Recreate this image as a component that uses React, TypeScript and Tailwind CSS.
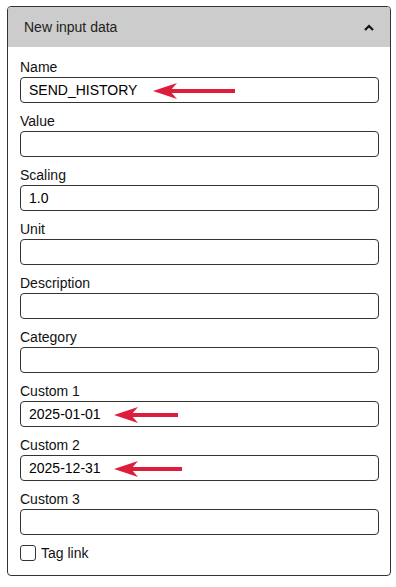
import React from 'react'

const fields = [
  { label: 'Name', value: 'SEND_HISTORY', arrow: { left: 132, width: 82 } },
  { label: 'Value', value: '' },
  { label: 'Scaling', value: '1.0' },
  { label: 'Unit', value: '' },
  { label: 'Description', value: '' },
  { label: 'Category', value: '' },
  { label: 'Custom 1', value: '2025-01-01', arrow: { left: 93, width: 64 } },
  { label: 'Custom 2', value: '2025-12-31', arrow: { left: 93, width: 68 } },
  { label: 'Custom 3', value: '' },
]

function Arrow({ left, width }: { left: number; width: number }) {
  return (
    <svg
      className="pointer-events-none absolute top-[4px]"
      style={{ left, width }}
      height={18}
      viewBox={`0 0 ${width} 18`}
    >
      <rect x={14} y={7} width={width - 14} height={4} fill="#dc1e3c" />
      <path d="M0 9 L24 1 L17 9 L24 17 Z" fill="#dc1e3c" />
    </svg>
  )
}

export default function App() {
  return (
    <div className="min-h-screen bg-white pt-[6px] pr-[5px] pb-[9px] pl-[7px] font-['Liberation_Sans',Arial,sans-serif] text-[14px] text-[#111]">
      <div className="overflow-hidden rounded-[4px] border border-[#333]">
        {/* Header */}
        <div className="flex h-[40px] items-center justify-between bg-[#cccccc] pl-[16px] pr-[15px]">
          <span className="text-[#222]">New input data</span>
          <svg width="12" height="9" viewBox="0 0 12 9">
            <polyline points="2,7 6,3 10,7" fill="none" stroke="#111" strokeWidth="2.2" />
          </svg>
        </div>

        {/* Body */}
        <div className="pt-[10px] pr-[11px] pb-[12px] pl-[12px]">
          {fields.map((f) => (
            <div key={f.label} className="mb-[8px]">
              <div className="h-[20px] leading-[20px]">{f.label}</div>
              <div className="relative h-[26px] rounded-[4px] border border-[#333] px-[8px] leading-[24px] text-black">
                {f.value}
                {f.arrow && <Arrow left={f.arrow.left} width={f.arrow.width} />}
              </div>
            </div>
          ))}
          <div className="mt-[2px] flex h-[20px] items-center gap-[5px]">
            <div className="h-[16px] w-[16px] rounded-[3px] border border-[#333]" />
            <span>Tag link</span>
          </div>
        </div>
      </div>
    </div>
  )
}
